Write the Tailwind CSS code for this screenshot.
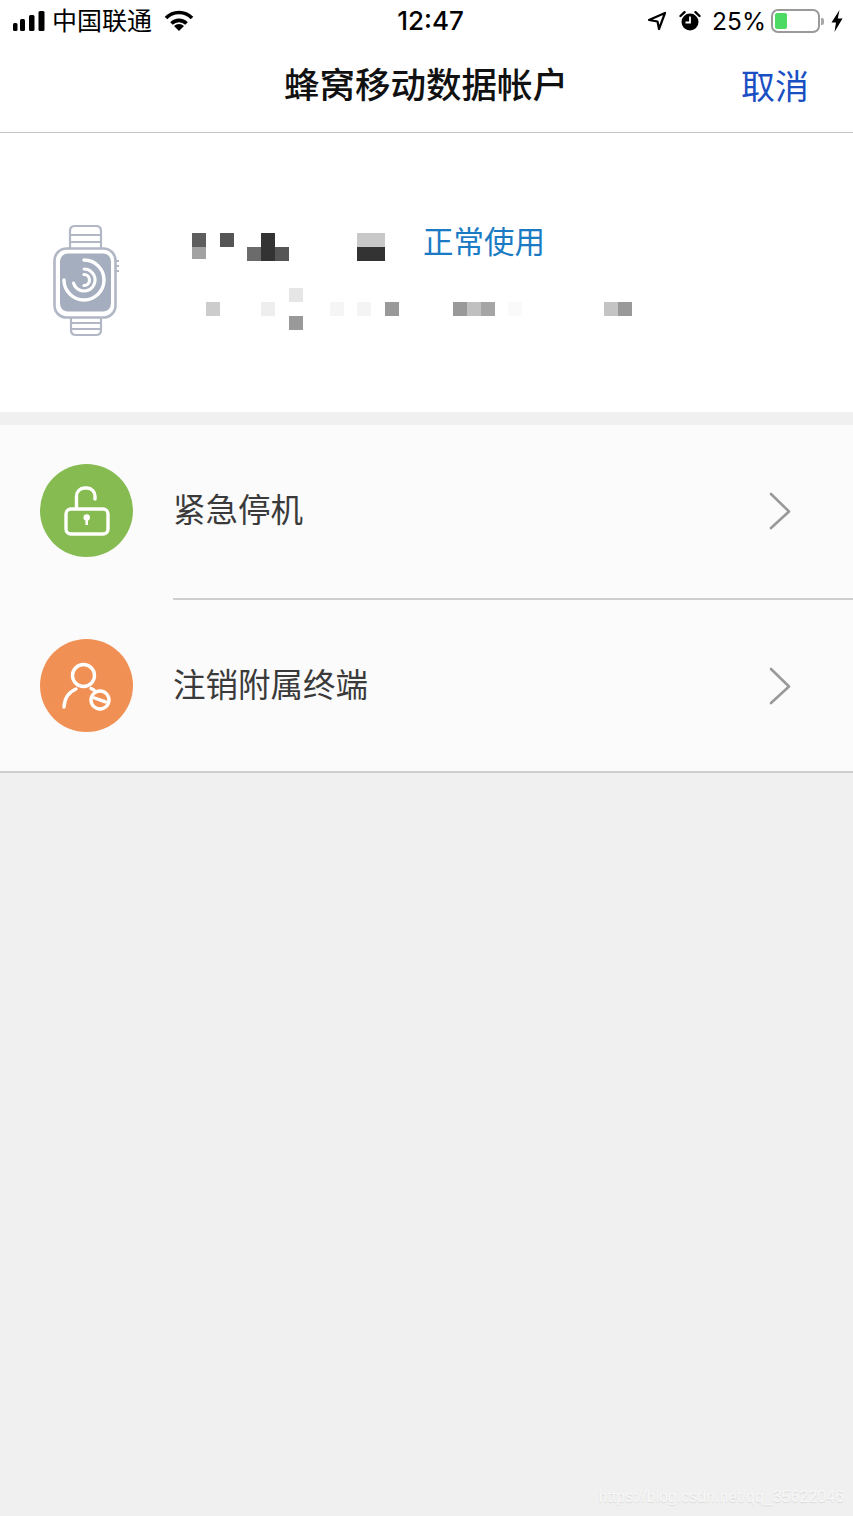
<!DOCTYPE html>
<html lang="zh-CN">
<head>
    <meta charset="UTF-8">
    <meta name="viewport" content="width=device-width, initial-scale=1.0">
    <title>蜂窝移动数据帐户</title>
    <script src="https://cdn.jsdelivr.net/npm/@tailwindcss/browser@4"></script>
</head>
<body class="bg-[#f0f0f0] font-['Inter','Noto_Sans_CJK_SC',sans-serif]">
    <div class="relative w-[853px] h-[1516px] overflow-hidden flex flex-col">
        <!-- Status bar -->
        <div class="bg-white h-[42px] shrink-0 grid grid-cols-[1fr_auto_1fr] items-center pl-[13px] pr-[10px] text-black">
            <div class="flex items-center">
                <svg width="32" height="20" viewBox="0 0 32 20" fill="#000">
                    <rect x="0" y="12" width="4.5" height="8" rx="1.5"/>
                    <rect x="7" y="8" width="5" height="12" rx="1.5"/>
                    <rect x="16" y="4" width="5.5" height="16" rx="1.5"/>
                    <rect x="25.5" y="0" width="6" height="20" rx="1.5"/>
                </svg>
                <span class="ml-[7px] text-[25px] leading-[30px]">中国联通</span>
                <svg class="ml-[12px]" width="30" height="22" viewBox="0 0 30 22" fill="none" stroke="#000" stroke-width="3.6">
                    <path d="M2 8 A18 18 0 0 1 28 8"/>
                    <path d="M7.5 13.5 A10.5 10.5 0 0 1 22.5 13.5"/>
                    <path d="M10 16 L15 21 L20 16 A7 7 0 0 0 10 16 Z" fill="#000" stroke="none"/>
                </svg>
            </div>
            <div class="text-[26px] leading-[30px] font-medium ml-[5px]">12:47</div>
            <div class="flex items-center justify-end">
                <svg width="20" height="20" viewBox="0 0 20 20" fill="none" stroke="#000" stroke-width="2.2" stroke-linejoin="round">
                    <path d="M2 9 L18 2 L12 18 L10.5 10.5 Z"/>
                </svg>
                <svg class="ml-[12px]" width="22" height="20" viewBox="0 0 22 20">
                    <circle cx="11" cy="11" r="8.5" fill="#000"/>
                    <path d="M1.5 5 L5.5 1.2 M20.5 5 L16.5 1.2" stroke="#000" stroke-width="2.4" stroke-linecap="round"/>
                    <path d="M11 5.5 V11.5 H6.5" fill="none" stroke="#fff" stroke-width="1.8"/>
                </svg>
                <span class="ml-[11px] text-[24.5px] leading-[30px]">25%</span>
                <div class="ml-[5px] w-[49px] h-[24px] rounded-[7px] border-2 border-[#9a9a9a] p-[2px]">
                    <div class="w-[12px] h-full rounded-[2px] bg-[#4cd964]"></div>
                </div>
                <div class="ml-[1px] w-[3px] h-[7px] rounded-r-[2px] bg-[#a8a8a8]"></div>
                <svg class="ml-[7px]" width="12" height="22" viewBox="0 0 12 22" fill="#000">
                    <path d="M8.5 0 L0.5 12.5 H5 L3.5 22 L11.5 8.5 H6.8 Z"/>
                </svg>
            </div>
        </div>

        <!-- Nav bar -->
        <div class="bg-white h-[91px] shrink-0 border-b border-[#c4c4c4] relative flex items-center justify-center pb-[3px]">
            <h1 class="text-[35.5px] leading-[44px] font-medium text-[#111] ml-[-1px]">蜂窝移动数据帐户</h1>
            <span class="absolute right-[44px] top-[23px] text-[34px] leading-[44px] text-[#1a4fc4]">取消</span>
        </div>

        <!-- Device card -->
        <div class="bg-white h-[279px] shrink-0 flex items-start pl-[53px]">
            <svg class="mt-[92px]" width="70" height="112" viewBox="0 0 70 112" fill="none" stroke="#b1b7c4" stroke-width="2.2">
                <path d="M17 23 V6 Q17 1 22 1 H43 Q48 1 48 6 V23"/>
                <path d="M17 10 H48 M17 17 H48"/>
                <path d="M18 92 V105 Q18 110 23 110 H43 Q48 110 48 105 V92"/>
                <path d="M18 98 H48 M18 104 H48"/>
                <rect x="1.5" y="23.5" width="61" height="69" rx="12" stroke-width="2.6"/>
                <rect x="7" y="28.5" width="51" height="58" rx="8" fill="#a5aebe" stroke="none"/>
                <path d="M63 36 H66 M63 41 H66 M63 46 H66" stroke-width="2"/>
                <g stroke="#fff" stroke-linecap="round">
                    <path d="M31 35 A20 20 0 1 1 11 55" stroke-width="3.4"/>
                    <path d="M31 44 A11 11 0 1 1 20.5 58" stroke-width="3"/>
                    <path d="M31 49.5 A5.5 5.5 0 0 1 31 60.5" stroke-width="3.2"/>
                </g>
            </svg>
            <div class="ml-[69px] mt-[100px] flex flex-col">
                <div class="flex items-start h-[28px]">
                    <svg width="193" height="28" viewBox="0 0 193 28">
                        <rect x="0" y="0" width="14" height="14" fill="#5e5e5e"/>
                        <rect x="0" y="14" width="14" height="12" fill="#a2a2a2"/>
                        <rect x="28" y="0" width="14" height="14" fill="#555"/>
                        <rect x="55" y="14" width="14" height="14" fill="#6b6b6b"/>
                        <rect x="69" y="0" width="14" height="28" fill="#333"/>
                        <rect x="83" y="14" width="14" height="14" fill="#555"/>
                        <rect x="165" y="0" width="28" height="14" fill="#c8c8c8"/>
                        <rect x="165" y="14" width="28" height="14" fill="#333"/>
                    </svg>
                    <span class="ml-[38px] mt-[-11px] text-[30.5px] leading-[40px] text-[#1a7bc4]">正常使用</span>
                </div>
                <svg class="mt-[27px]" width="440" height="42" viewBox="0 0 440 42">
                    <rect x="14" y="14" width="14" height="14" fill="#ccc"/>
                    <rect x="69" y="14" width="14" height="14" fill="#eee"/>
                    <rect x="97" y="0" width="14" height="14" fill="#e6e6e6"/>
                    <rect x="97" y="28" width="14" height="14" fill="#999"/>
                    <rect x="138" y="14" width="14" height="14" fill="#f5f5f5"/>
                    <rect x="165" y="14" width="14" height="14" fill="#f4f4f4"/>
                    <rect x="193" y="14" width="14" height="14" fill="#999"/>
                    <rect x="261" y="14" width="14" height="14" fill="#999"/>
                    <rect x="275" y="14" width="14" height="14" fill="#c0c0c0"/>
                    <rect x="289" y="14" width="14" height="14" fill="#a5a5a5"/>
                    <rect x="316" y="14" width="14" height="14" fill="#fafafa"/>
                    <rect x="412" y="14" width="14" height="14" fill="#c4c4c4"/>
                    <rect x="426" y="14" width="14" height="14" fill="#999"/>
                </svg>
            </div>
        </div>

        <!-- Actions -->
        <div class="mt-[13px] bg-[#fbfbfb] border-b-2 border-[#cfcfcf] shrink-0">
            <div class="h-[171px] flex items-center pl-[40px] pr-[61px]">
                <div class="w-[93px] h-[93px] rounded-full bg-[#86bb52] shrink-0">
                    <svg width="93" height="93" viewBox="0 0 93 93" fill="none" stroke="#fff" stroke-width="3.4">
                        <rect x="26" y="45" width="42" height="25" rx="5"/>
                        <path d="M36.5 44 V32 A8 8 0 0 1 44.5 24 H47 A8 8 0 0 1 55 32 V35" stroke-linecap="round"/>
                        <circle cx="46.7" cy="53.5" r="3.2" fill="#fff" stroke="none"/>
                        <path d="M46.7 54 V61" stroke-width="2.6"/>
                    </svg>
                </div>
                <span class="ml-[40px] mt-[1px] text-[32.5px] leading-[44px] text-[#3a3a3a] flex-1">紧急停机</span>
                <svg width="24" height="38" viewBox="0 0 24 38" fill="none" stroke="#999" stroke-width="2.6" stroke-linecap="round" stroke-linejoin="round">
                    <path d="M3 2 L21 19.5 L3 36"/>
                </svg>
            </div>
            <div class="ml-[173px] mt-[2px] h-[2px] bg-[#cfcfcf]"></div>
            <div class="h-[171px] flex items-center pl-[40px] pr-[61px]">
                <div class="w-[93px] h-[93px] rounded-full bg-[#f19054] shrink-0">
                    <svg width="93" height="93" viewBox="0 0 93 93" fill="none" stroke="#fff" stroke-width="3.4" stroke-linecap="round">
                        <circle cx="43.5" cy="36.5" r="11"/>
                        <path d="M24 68 C24.5 59 29 53 36 50"/>
                        <path d="M51 49.5 L54 51"/>
                        <circle cx="60" cy="61" r="9"/>
                        <path d="M54.5 59 L65.5 62.8"/>
                    </svg>
                </div>
                <span class="ml-[40px] mt-[1px] text-[32.5px] leading-[44px] text-[#3a3a3a] flex-1">注销附属终端</span>
                <svg width="24" height="38" viewBox="0 0 24 38" fill="none" stroke="#999" stroke-width="2.6" stroke-linecap="round" stroke-linejoin="round">
                    <path d="M3 2 L21 19.5 L3 36"/>
                </svg>
            </div>
        </div>

        <!-- Watermark -->
        <span class="absolute right-[9px] bottom-[8px] font-['Liberation_Sans',sans-serif] text-[16px] leading-[22px] text-[#f8f8f8] [text-shadow:0_1px_1px_rgba(0,0,0,0.1)]">https://blog.csdn.net/qq_35622046</span>
    </div>
</body>
</html>
